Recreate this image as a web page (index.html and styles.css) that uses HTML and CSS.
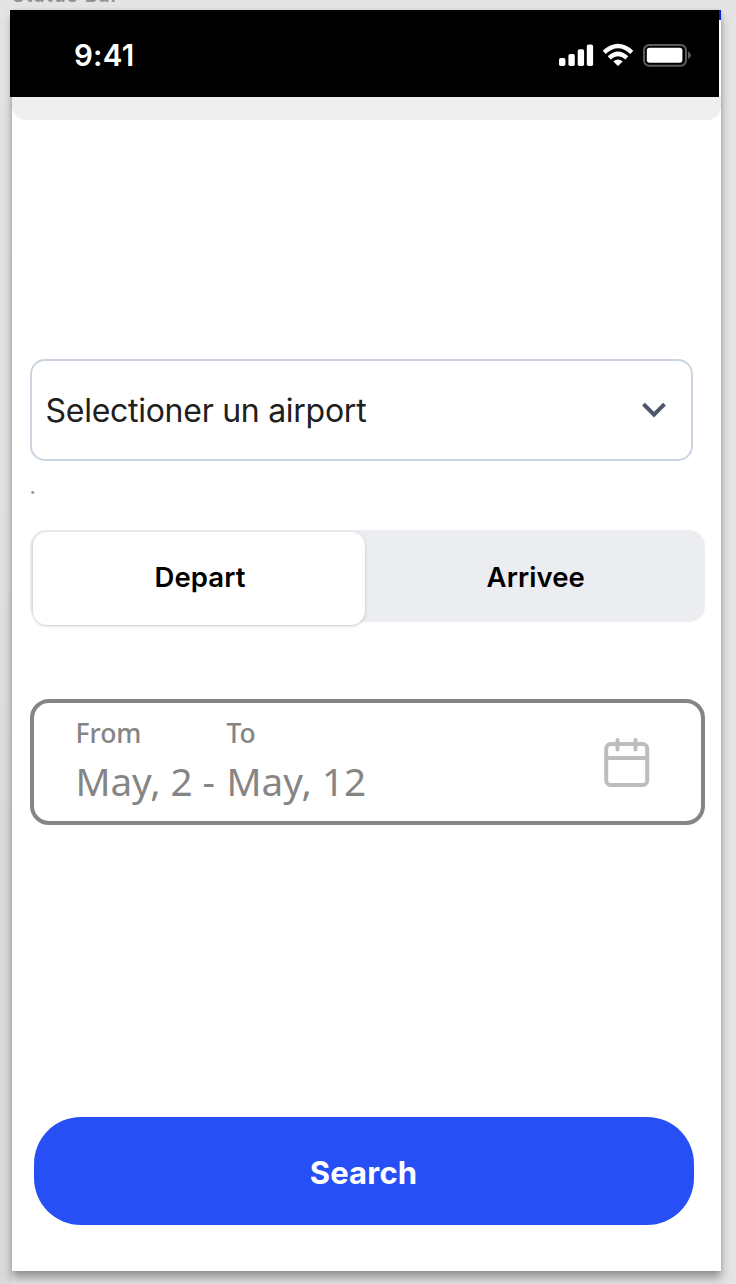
FILE: index.html
```html
<!DOCTYPE html>
<html lang="fr">
<head>
<meta charset="utf-8">
<title>Airport search</title>
<link rel="stylesheet" href="styles.css">
</head>
<body>
<div class="frame-label">Status Bar</div>
<main class="phone">
  <header class="status">
    <span class="time">9:41</span>
    <svg class="status-icons" width="134" height="26" viewBox="558 42 134 26">
      <g fill="#fff">
        <rect x="559" y="58" width="6.4" height="8" rx="1.8"/>
        <rect x="568.4" y="54" width="6.4" height="12" rx="1.8"/>
        <rect x="577.7" y="49.2" width="6.4" height="16.8" rx="1.8"/>
        <rect x="586.8" y="44.6" width="6.3" height="21.4" rx="1.8"/>
      </g>
      <g fill="none" stroke="#fff" stroke-width="4.4">
        <path d="M604.2 52.3 Q618 39.8 631.8 52.3"/>
        <path d="M609.2 57.9 Q618 49.9 626.8 57.9"/>
      </g>
      <path d="M618 66 L613.3 61.4 Q618 57.4 622.7 61.4 Z" fill="#fff"/>
      <rect x="644" y="45" width="42" height="20.8" rx="5.2" fill="none" stroke="#5b5b5b" stroke-width="2"/>
      <rect x="646.8" y="47.8" width="35.6" height="15" rx="2.8" fill="#fff"/>
      <path d="M688 51.2 Q691 53 691 55.3 Q691 57.6 688 59.3 Z" fill="#5b5b5b"/>
    </svg>
  </header>
  <div class="strip"></div>
  <section class="form">
    <div class="select">
      <span class="select-text">Selectioner un airport</span>
      <svg width="24" height="16" viewBox="0 0 24 16"><path d="M1.5 2.2 L12 12.7 L22.5 2.2" fill="none" stroke="#4e566b" stroke-width="4"/></svg>
    </div>
    <div class="hint">.</div>
    <div class="tabs">
      <div class="tab active"><span>Depart</span></div>
      <div class="tab"><span>Arrivee</span></div>
    </div>
    <div class="dates">
      <div class="date-info">
        <div class="date-labels"><span>From</span><span>To</span></div>
        <div class="date-values"><span class="from-date">May, 2 - </span><span class="to-date">May, 12</span></div>
      </div>
      <svg class="calendar" width="46" height="50" viewBox="0 0 46 50" fill="none" stroke="#bdbdbd" stroke-width="4">
        <rect x="2.2" y="6" width="41" height="41" rx="4.5"/>
        <path d="M2 20H43"/>
        <path d="M13.5 2V11.5M31.5 2V11.5" stroke-linecap="round"/>
      </svg>
    </div>
    <button class="search" type="button">Search</button>
  </section>
</main>
</body>
</html>
```
FILE: styles.css
```css
* { box-sizing: border-box; }
body {
  margin: 0;
  height: 1284px;
  padding: 10px 15px 0 12px;
  overflow: hidden;
  position: relative;
  background: linear-gradient(#e4e4e4 0, #e2e2e2 500px, #dadada 900px) 0 0 / 12px 100% no-repeat, #e4e4e4;
  font-family: Inter, "Liberation Sans", sans-serif;
}
.frame-label {
  position: absolute;
  left: 12px;
  top: -14px;
  font-size: 19px;
  line-height: 20px;
  letter-spacing: 1.3px;
  font-weight: 600;
  color: #929292;
}
.phone {
  position: relative;
  width: 709px;
  height: 1261px;
  background: linear-gradient(#0b1ddd, #0b1ddd) 707px 0 / 2px 10px no-repeat, #fff;
  box-shadow: 0 7px 9px rgba(0, 0, 0, .35), 0 0 3px rgba(0, 0, 0, .1);
}
.status {
  display: flex;
  justify-content: space-between;
  align-items: flex-start;
  width: 709px;
  height: 86.7px;
  margin-left: -2px;
  padding: 32px 27px 0 64px;
  background: #000;
}
.time {
  font-size: 29.5px;
  line-height: 26px;
  font-weight: 580;
  letter-spacing: .25px;
  color: #fff;
}
.status-icons { display: block; }
.strip {
  height: 23.3px;
  background: #efefef;
  border-radius: 0 0 14px 14px;
}
.form {
  display: flex;
  flex-direction: column;
  padding: 239px 16px 0 17.5px;
}
.select {
  display: flex;
  align-items: center;
  justify-content: space-between;
  width: 663.5px;
  height: 102px;
  padding: 0 25.5px 0 14px;
  border: 2px solid #cbd5e1;
  border-radius: 15px;
}
.select-text {
  padding-top: 2px;
  font-size: 32px;
  line-height: 40px;
  letter-spacing: -.27px;
  color: #202020;
}
.hint {
  height: 69px;
  padding-top: 12px;
  font-size: 22px;
  line-height: 26px;
  color: #949494;
}
.tabs {
  display: flex;
  align-items: flex-start;
  width: 675px;
  height: 92.5px;
  padding: 2px 0 0 3.5px;
  background: #ecedf1;
  border-radius: 16px;
}
.tab {
  flex: 1;
  display: flex;
  align-items: center;
  justify-content: center;
  height: 91px;
  padding-left: 2.5px;
  font-size: 27.5px;
  font-weight: 600;
  letter-spacing: .1px;
  color: #000;
}
.tab.active {
  flex: none;
  width: 331.5px;
  height: 93px;
  padding-bottom: 2px;
  background: #fff;
  border-radius: 14px;
  box-shadow: 0 1px 3px rgba(0, 0, 0, .22);
}
.dates {
  display: flex;
  justify-content: space-between;
  align-items: flex-start;
  width: 675px;
  height: 126px;
  margin-top: 77px;
  padding: 14px 50.5px 0 42px;
  border: 4px solid #858585;
  border-radius: 19px;
}
.date-info {
  font-family: "Noto Sans", sans-serif;
  color: #858585;
}
.date-labels, .date-values {
  display: grid;
  grid-template-columns: 151px auto;
  white-space: pre;
}
.date-labels {
  font-size: 26.5px;
  line-height: 32px;
  font-weight: 500;
}
.date-values {
  margin-top: 8px;
  font-size: 38.7px;
  line-height: 48px;
}
.from-date { letter-spacing: -.1px; }
.calendar { margin-top: 21px; }
.search {
  height: 108.5px;
  width: 660px;
  margin: 291.5px 0 0 4px;
  padding: 2px 0 0;
  border: 0;
  border-radius: 47px;
  background: #274ff6;
  color: #fff;
  font-family: inherit;
  font-size: 31px;
  font-weight: 650;
  letter-spacing: .2px;
}
```
